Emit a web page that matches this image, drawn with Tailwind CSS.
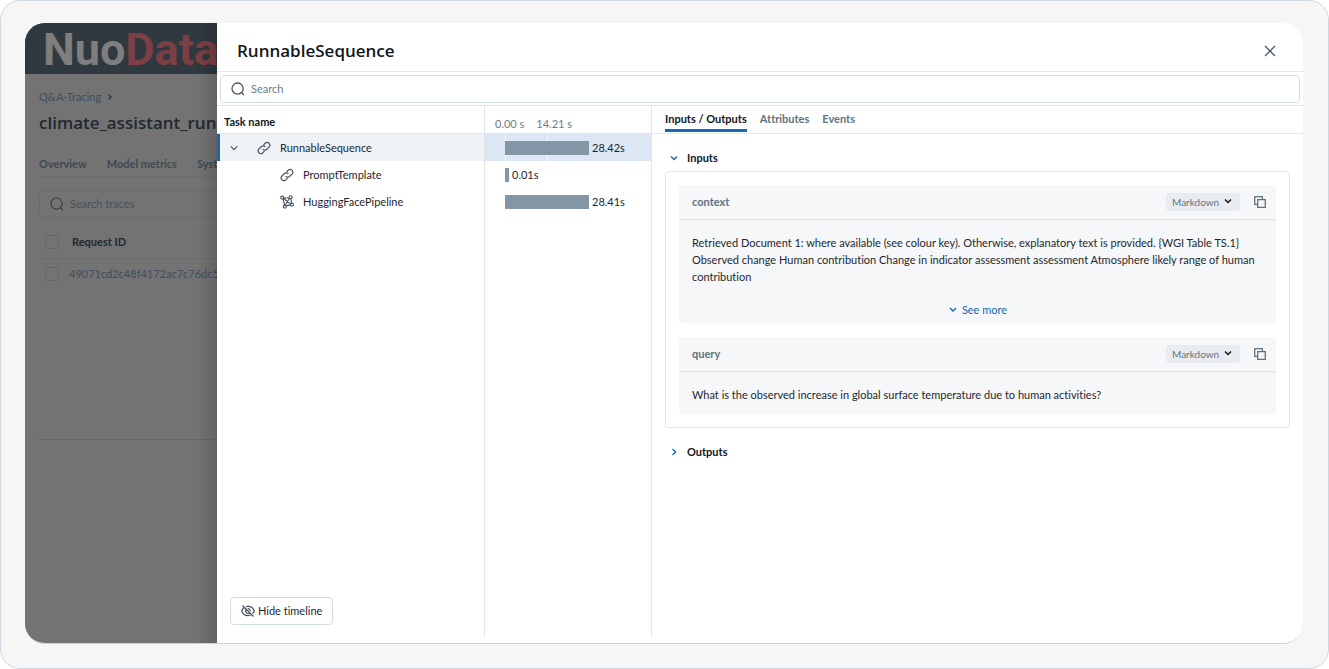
<!DOCTYPE html>
<html lang="en">
<head>
  <meta charset="UTF-8" />
  <meta name="viewport" content="width=device-width, initial-scale=1.0"/>
  <title>NuoData - Q&amp;A Tracing</title>
  <script src="https://cdn.jsdelivr.net/npm/@tailwindcss/browser@4"></script>
</head>
<body class="bg-white font-['Lato','Open_Sans',sans-serif] [font-variant-ligatures:none] text-[11px] leading-4 text-[#1f272d]">

  <div class="min-h-screen flex rounded-[20px] border border-[#cfd8de] bg-[#f6f6f6] pt-[22px] pb-6 pl-6 pr-[25px]">
    <div class="flex-1 min-w-0 flex rounded-[20px] overflow-hidden border-b border-[#cbd3d9]">

      <!-- dimmed page behind the drawer -->
      <div class="relative w-48 shrink-0 overflow-hidden bg-[#737373] text-[#3d464c] whitespace-nowrap">
        <div class="h-[51px] bg-[#30393f] pt-0.5 pl-[18px] flex items-center font-['Roboto',sans-serif] font-bold text-[45px]">
          <span class="text-[#7e7e7e]">Nuo</span><span class="text-[#7b3f45]">Data</span>
        </div>
        <div class="pl-3.5">
          <nav class="mt-[15px] flex items-center gap-1.5 text-[#3f4f5b]">
            <a href="#">Q&amp;A-Tracing</a>
            <svg class="w-1.5 h-2" viewBox="0 0 6 8" fill="none" stroke="#30383e" stroke-width="1.3"><path d="M1.5 1.5 4 4 1.5 6.5"/></svg>
          </nav>
          <h1 class="mt-1.5 font-['Open_Sans',sans-serif] text-[17px] leading-6 font-semibold text-[#22292e]">climate_assistant_run</h1>
          <nav class="mt-[21px] pb-1 flex gap-5 font-bold text-[#3f4a52] border-b border-[#6a6d6f]">
            <a href="#">Overview</a>
            <a href="#">Model metrics</a>
            <a href="#">System metrics</a>
          </nav>
          <label class="mt-[13px] h-7 w-[300px] flex items-center gap-1.5 pl-2.5 rounded border border-[#666b6e]">
            <svg class="w-3.5 h-3.5 shrink-0" viewBox="0 0 14 14" fill="none" stroke="#333f48" stroke-width="1.2"><circle cx="6.6" cy="6.6" r="5.6"/><path d="M10.6 10.6 13 13"/></svg>
            <input type="text" placeholder="Search traces" class="outline-none placeholder:text-[#46535c]"/>
          </label>
          <table class="w-[300px] mt-2 text-left">
            <thead>
              <tr class="h-8 border-b border-[#6a6d6f]">
                <th class="w-[30px] pl-1.5"><input type="checkbox" aria-label="Select all" class="block appearance-none w-3.5 h-3.5 rounded border border-[#626669]"/></th>
                <th class="pl-[3px] font-bold text-[#22292e]">Request ID</th>
              </tr>
            </thead>
            <tbody>
              <tr class="h-8">
                <td class="pl-1.5"><input type="checkbox" aria-label="Select trace" class="block appearance-none w-3.5 h-3.5 rounded border border-[#626669]"/></td>
                <td class="text-[#3f4f5b]"><a href="#">49071cd2c48f4172ac7c76dc5</a></td>
              </tr>
            </tbody>
          </table>
          <div class="h-[150px] border-b border-[#676767]"></div>
        </div>
        <div class="absolute inset-y-0 right-0 w-5 bg-linear-to-l from-black/15 to-transparent"></div>
      </div>

      <!-- trace drawer -->
      <div class="flex-1 min-w-0 flex flex-col bg-white">
        <div class="h-[49px] shrink-0 flex items-center justify-between pt-2 pl-5 pr-[26px] border-b border-[#e4e8ec]">
          <h2 class="font-['Open_Sans',sans-serif] text-[17px] leading-6 font-semibold text-[#11171c]">RunnableSequence</h2>
          <button aria-label="Close" class="w-3.5 h-3.5">
            <svg class="w-3.5 h-3.5" viewBox="0 0 14 14" fill="none" stroke="#4a5a66" stroke-width="1.3"><path d="M2 2 12 12M12 2 2 12"/></svg>
          </button>
        </div>
        <div class="shrink-0 pt-[3px] pb-0.5 px-[3px] border-b border-[#dfe5ea]">
          <label class="h-7 flex items-center gap-1.5 pl-2.5 rounded border border-[#d5dee5]">
            <svg class="w-3.5 h-3.5 shrink-0" viewBox="0 0 14 14" fill="none" stroke="#44535f" stroke-width="1.3"><circle cx="6.6" cy="6.6" r="5.6"/><path d="M10.6 10.6 13 13"/></svg>
            <input type="text" placeholder="Search" class="flex-1 outline-none placeholder:text-[#6b7d8a]"/>
          </label>
        </div>

        <div class="flex-1 flex min-h-0">
          <!-- task tree -->
          <div class="w-[267px] shrink-0 flex flex-col">
            <div class="h-7 flex items-center pt-1 pl-[7px] border-b border-[#dde4ea] font-bold text-[#11171c]">Task name</div>
            <div class="h-[27px] flex items-center bg-[#eff3f8] border-l-3 border-[#1668b4]">
              <button aria-label="Collapse RunnableSequence" class="ml-1.5 w-4 h-4 flex items-center justify-center">
                <svg class="w-2 h-2" viewBox="0 0 8 8" fill="none" stroke="#44535f" stroke-width="1.2"><path d="M.8 2.400 4 5.600 7.200 2.400"/></svg>
              </button>
              <svg class="ml-[15px] w-3.5 h-3.5" viewBox="0 0 14 14" fill="none" stroke="#44535f" stroke-width="1.2"><path d="M5.600 8.200a2.700 2.700 0 0 0 3.900.3l2.700-2.700A2.700 2.700 0 0 0 8.400 2L6.500 3.900"/><path d="M8.400 5.800a2.700 2.700 0 0 0-3.900-.3L1.800 8.200A2.700 2.700 0 0 0 5.600 12l1.900-1.900"/></svg>
              <span class="ml-[9px]">RunnableSequence</span>
            </div>
            <div class="h-[27px] flex items-center pl-[63px]">
              <svg class="w-3.5 h-3.5" viewBox="0 0 14 14" fill="none" stroke="#44535f" stroke-width="1.2"><path d="M5.600 8.200a2.700 2.700 0 0 0 3.900.3l2.700-2.700A2.700 2.700 0 0 0 8.400 2L6.500 3.900"/><path d="M8.400 5.800a2.700 2.700 0 0 0-3.900-.3L1.800 8.200A2.700 2.700 0 0 0 5.600 12l1.900-1.900"/></svg>
              <span class="ml-[9px]">PromptTemplate</span>
            </div>
            <div class="h-[27px] flex items-center pl-[63px]">
              <svg class="w-3.5 h-3.5" viewBox="0 0 14 14" fill="none" stroke="#44535f" stroke-width="1.100"><circle cx="2.200" cy="2.600" r="1.500"/><circle cx="10.600" cy="2.200" r="1.500"/><circle cx="4.800" cy="11.600" r="1.500"/><circle cx="11.900" cy="9.600" r="1.500"/><path d="M3.700 3H9.100M3 3.900 4.600 10M9.500 3.300 5.300 10M3.500 3.500 10.600 8.900M10.900 3.700 11.600 8.100M6.100 10.900 10.500 9.900"/></svg>
              <span class="ml-[9px]">HuggingFacePipeline</span>
            </div>
            <div class="mt-auto pl-[13px] pb-[18px]">
              <button class="h-7 flex items-center gap-[3px] px-2.5 rounded border border-[#d3dde4]">
                <svg class="w-3.5 h-3.5" viewBox="0 0 14 14" fill="none" stroke="#44535f" stroke-width="1.2"><path d="M3.400 3.600C2 4.500 1 5.800.7 7c.8 2.500 3.300 4.600 6.300 4.600 1.300 0 2.500-.4 3.500-1M5 2.700C5.600 2.500 6.300 2.400 7 2.400c3 0 5.500 2.100 6.300 4.600-.3.900-.9 1.800-1.700 2.600M1.500 1.500 12.500 12.500"/><path d="M5.300 5.500A2.300 2.300 0 0 0 8.500 8.800M6.700 4.700A2.300 2.300 0 0 1 9.300 7.300"/></svg>
                Hide timeline
              </button>
            </div>
          </div>

          <!-- timeline -->
          <div class="w-[168px] shrink-0 mb-1.5 border-x border-[#dfe5ea]">
            <div class="h-7 flex items-center gap-3 pt-2 pl-2.5 border-b border-[#dde4ea] text-[#6b7d8a]">
              <span>0.00 s</span>
              <span>14.21 s</span>
            </div>
            <div class="relative h-[27px] flex items-center gap-[3px] pl-5 bg-[#dce7f3]">
              <div class="absolute inset-y-0 left-5 w-px bg-white/80"></div>
              <div class="absolute inset-y-0 left-[62px] w-px bg-white/80"></div>
              <div class="relative w-[84px] h-3.5 bg-[#8396a5]"></div>
              <span>28.42s</span>
            </div>
            <div class="h-[27px] flex items-center gap-[3px] pl-5">
              <div class="w-1 h-3.5 bg-[#8396a5]"></div>
              <span>0.01s</span>
            </div>
            <div class="h-[27px] flex items-center gap-[3px] pl-5">
              <div class="w-[84px] h-3.5 bg-[#8396a5]"></div>
              <span>28.41s</span>
            </div>
          </div>

          <!-- span details -->
          <div class="flex-1 min-w-0">
            <nav class="h-7 flex gap-[13px] pl-[13px] border-b border-[#e2e7eb] font-bold text-[#5f7281]">
              <a href="#" class="h-[26px] pt-[5px] border-b-3 border-[#1668b4] text-[#11171c]">Inputs / Outputs</a>
              <a href="#" class="pt-[5px]">Attributes</a>
              <a href="#" class="pt-[5px]">Events</a>
            </nav>
            <div class="px-[13px] pt-4">
              <button class="flex items-center gap-2 pl-1 font-bold text-[#11171c]">
                <svg class="w-2.5 h-2.5" viewBox="0 0 10 10" fill="none" stroke="#1668b4" stroke-width="1.4"><path d="M2 3.500 5 6.500 8 3.500"/></svg>
                Inputs
              </button>
              <div class="mt-[5px] p-[13px] flex flex-col gap-3.5 rounded border border-[#dfe5ea]">
                <section class="rounded bg-[#f5f7f9]">
                  <div class="h-[35px] flex items-center pl-[13px] pr-2.5 border-b border-[#dce2e7]">
                    <h3 class="font-bold text-[#5f7281]">context</h3>
                    <div class="relative ml-auto">
                      <select aria-label="Format of context" class="block appearance-none w-[74px] h-[18px] pl-1.5 rounded bg-[#e8ecf0] text-[10px] text-[#5f7281]"><option>Markdown</option></select>
                      <svg class="absolute right-2 top-1 w-2 h-2 pointer-events-none" viewBox="0 0 8 8" fill="none" stroke="#11171c" stroke-width="1.500"><path d="M1 2.500 4 5.500 7 2.500"/></svg>
                    </div>
                    <button aria-label="Copy context" class="ml-3.5">
                      <svg class="w-3 h-3" viewBox="0 0 12 12" fill="none" stroke="#5f7281" stroke-width="1.300"><path d="M3.500 8.300H.7V.7h7.600v2.800"/><path d="M3.700 3.700h7.600v7.600H3.700z"/></svg>
                    </button>
                  </div>
                  <p class="pt-3.5 px-[13px] leading-[17px]">Retrieved Document 1: where available (see colour key). Otherwise, explanatory text is provided. {WGI Table TS.1} Observed change Human contribution Change in indicator assessment assessment Atmosphere likely range of human contribution</p>
                  <button class="mx-auto mt-[17px] pb-[5px] flex items-center gap-1 text-[#1668b4]">
                    <svg class="w-2.5 h-2.5" viewBox="0 0 10 10" fill="none" stroke="#1668b4" stroke-width="1.400"><path d="M2 3 5 6 8 3"/></svg>
                    See more
                  </button>
                </section>
                <section class="rounded bg-[#f5f7f9]">
                  <div class="h-[35px] flex items-center pl-[13px] pr-2.5 border-b border-[#dce2e7]">
                    <h3 class="font-bold text-[#5f7281]">query</h3>
                    <div class="relative ml-auto">
                      <select aria-label="Format of query" class="block appearance-none w-[74px] h-[18px] pl-1.5 rounded bg-[#e8ecf0] text-[10px] text-[#5f7281]"><option>Markdown</option></select>
                      <svg class="absolute right-2 top-1 w-2 h-2 pointer-events-none" viewBox="0 0 8 8" fill="none" stroke="#11171c" stroke-width="1.500"><path d="M1 2.500 4 5.500 7 2.500"/></svg>
                    </div>
                    <button aria-label="Copy query" class="ml-3.5">
                      <svg class="w-3 h-3" viewBox="0 0 12 12" fill="none" stroke="#5f7281" stroke-width="1.300"><path d="M3.500 8.300H.7V.7h7.600v2.800"/><path d="M3.700 3.700h7.600v7.600H3.700z"/></svg>
                    </button>
                  </div>
                  <p class="pt-3.5 pb-[11px] px-[13px] leading-[17px]">What is the observed increase in global surface temperature due to human activities?</p>
                </section>
              </div>
              <button class="mt-4 flex items-center gap-2 pl-1 font-bold text-[#11171c]">
                <svg class="w-2.5 h-2.5" viewBox="0 0 10 10" fill="none" stroke="#1668b4" stroke-width="1.400"><path d="M3.500 2 6.500 5 3.500 8"/></svg>
                Outputs
              </button>
            </div>
          </div>
        </div>
      </div>

    </div>
  </div>

</body>
</html>
